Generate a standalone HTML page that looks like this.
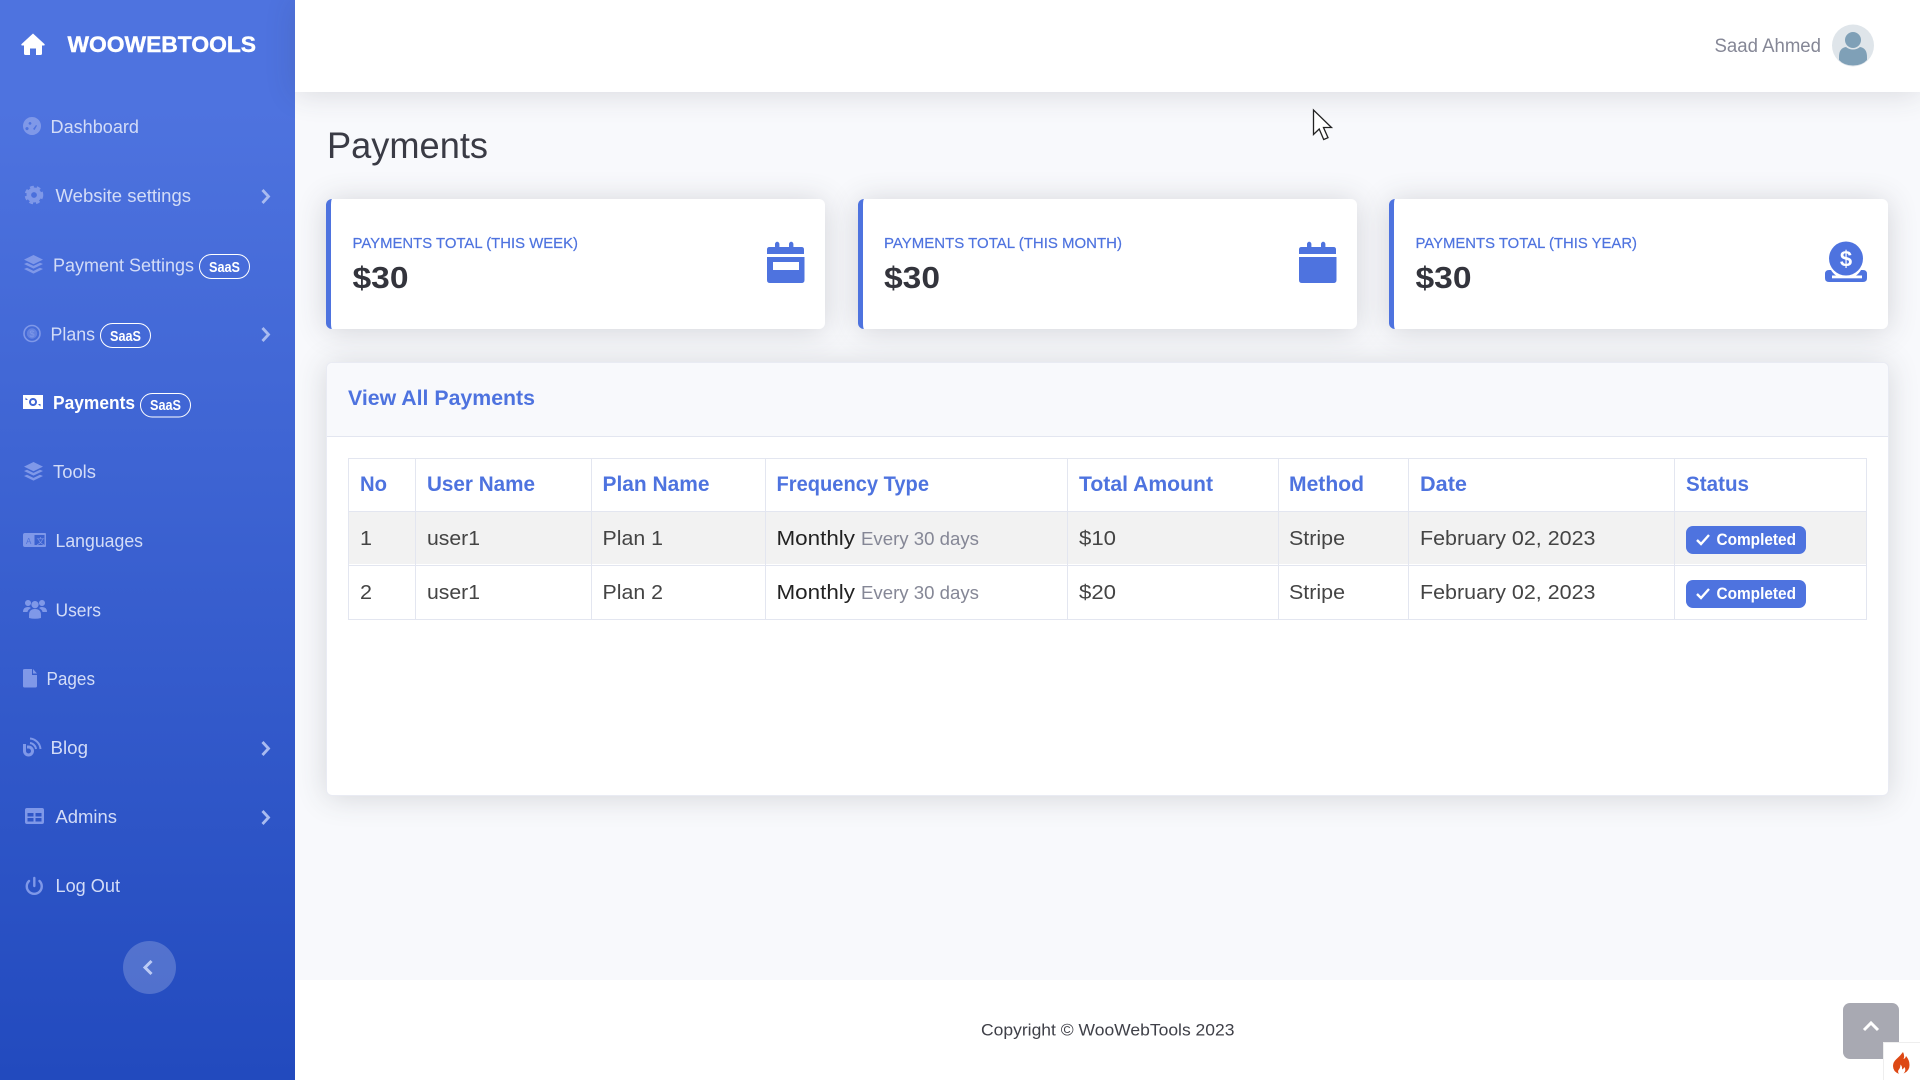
<!DOCTYPE html>
<html lang="en">
<head>
<meta charset="utf-8">
<title>Payments</title>
<style>
html,body{margin:0;padding:0;width:1920px;height:1080px;overflow:hidden;background:#f8f9fc;font-family:"Liberation Sans",sans-serif}
.a{position:absolute;box-sizing:border-box}
#side{left:0;top:0;width:295px;height:1080px;background:linear-gradient(180deg,#4e73df 10%,#224abe 100%)}
#top{left:295px;top:0;width:1625px;height:92px;background:#fff;box-shadow:0 2px 28px rgba(58,59,69,.16)}
.card{top:199px;width:499px;height:130px;background:#fff;border-left:5px solid #4e73df;border-radius:6px;box-shadow:0 2px 30px rgba(58,59,69,.2)}
#panel{left:326px;top:362px;width:1563px;height:434px;background:#fff;border:1px solid #e9ebf3;border-radius:6px;box-shadow:0 2px 30px rgba(58,59,69,.18)}
#phead{left:0;top:0;width:1561px;height:74px;background:#f8f9fc;border-bottom:1px solid #e3e6f0;border-radius:6px 6px 0 0}
#foot{left:295px;top:980px;width:1625px;height:100px;background:#fff}
#r1{left:348px;top:511px;width:1519px;height:53px;background:#f2f2f2}
.h{background:#e3e6f0}
.badge{left:1686px;width:120px;height:28px;background:#4e73df;border-radius:7px}
#up{left:1843px;top:1003px;width:56px;height:56px;background:#a8a9b2;border-radius:7px}
#fl{left:1883px;top:1042px;width:37px;height:38px;background:#fff;border-left:1px solid #eee;border-top:1px solid #eee}
svg{position:absolute;left:0;top:0}
text{font-family:"Liberation Sans",sans-serif}
.m{font-size:18.5px;fill:#d3dcf7}
.s{font-size:14.5px;font-weight:700;fill:#fff}
.i{fill:#7f98e8}
.th{font-size:21px;font-weight:700;fill:#4e73df}
.td{font-size:20.5px;fill:#444}
.lb{font-size:15px;fill:#4e73df;stroke:#4e73df;stroke-width:.2px}
.v{font-size:31px;font-weight:700;fill:#33343c}
</style>
</head>
<body>
<div class="a" id="side"></div>
<div class="a" id="foot"></div>
<div class="a" id="top"></div>
<div class="a card" style="left:326px"></div>
<div class="a card" style="left:858px"></div>
<div class="a card" style="left:1389px"></div>
<div class="a" id="panel"><div class="a" id="phead"></div></div>
<div class="a" id="r1"></div>
<div class="a h" style="left:348px;top:458px;width:1519px;height:1px"></div>
<div class="a h" style="left:348px;top:511px;width:1519px;height:1px"></div>
<div class="a h" style="left:348px;top:565px;width:1519px;height:1px"></div>
<div class="a h" style="left:348px;top:619px;width:1519px;height:1px"></div>
<div class="a h" style="left:348px;top:458px;width:1px;height:162px"></div>
<div class="a h" style="left:415px;top:458px;width:1px;height:162px"></div>
<div class="a h" style="left:591px;top:458px;width:1px;height:162px"></div>
<div class="a h" style="left:765px;top:458px;width:1px;height:162px"></div>
<div class="a h" style="left:1067px;top:458px;width:1px;height:162px"></div>
<div class="a h" style="left:1278px;top:458px;width:1px;height:162px"></div>
<div class="a h" style="left:1408px;top:458px;width:1px;height:162px"></div>
<div class="a h" style="left:1674px;top:458px;width:1px;height:162px"></div>
<div class="a h" style="left:1866px;top:458px;width:1px;height:162px"></div>
<div class="a badge" style="top:526px"></div>
<div class="a badge" style="top:580px"></div>
<div class="a" id="up"></div>
<div class="a" id="fl"></div>

<svg width="1920" height="1080" viewBox="0 0 1920 1080">
<!-- logo -->
<path fill="#fff" d="M33 33.5L21.6 44q-.8 1 .3 1.5H24v8q0 1.5 1.5 1.5H30v-6.5h6V55h4.5q1.5 0 1.5-1.5v-8h2.1q1.1-.5.3-1.5z"/>
<text x="67.500" y="52" font-size="22" font-weight="700" fill="#fff" stroke="#fff" stroke-width=".4" textLength="188.500" lengthAdjust="spacingAndGlyphs">WOOWEBTOOLS</text>

<!-- sidebar icons -->
<path class="i" fill-rule="evenodd" d="M32 117a9 9 0 1 0 .01 0zM27 127a1.6 1.6 0 1 0 .01 0zM30 122a1.4 1.4 0 1 0 .01 0zM36 125l-3 4 1.6 1 2.4-4.4z"/>
<circle cx="34" cy="195" r="5.200" fill="none" stroke="#7f98e8" stroke-width="4.600"/>
<circle cx="34" cy="195" r="8" fill="none" stroke="#7f98e8" stroke-width="2.600" stroke-dasharray="3.800 2.900"/>
<path class="i" d="M33.500 255L43 259.600 33.500 264.200 24 259.600zM24 264l3-1.300 6.500 3.200 6.500-3.200 3 1.300-9.500 4.600zM24 269l3-1.300 6.500 3.200 6.500-3.200 3 1.300-9.500 4.600z"/>
<circle cx="32" cy="333.500" r="8" fill="none" stroke="#7f98e8" stroke-width="1.600"/>
<circle cx="32" cy="333.500" r="5.200" class="i" fill-opacity=".55"/>
<text x="32" y="337" font-size="9" text-anchor="middle" fill="#7f98e8">$</text>
<path fill="#fff" fill-rule="evenodd" d="M23 395h20v14H23zM33 398a4 4 0 1 0 .01 0zM25.500 397.500v2.500h2.500zM40.500 406.500v-2.500h-2.500z"/>
<circle cx="33" cy="402" r="2" fill="#fff"/>
<path class="i" d="M33.500 462L43 466.600 33.500 471.200 24 466.600zM24 471l3-1.300 6.500 3.200 6.500-3.200 3 1.300-9.500 4.600zM24 476l3-1.300 6.500 3.200 6.500-3.200 3 1.300-9.500 4.600z"/>
<path class="i" fill-rule="evenodd" d="M25 533h20q1 0 1 1v12q0 1-1 1H25q-2 0-2-2v-10q0-2 2-2zM34.500 535v10h10v-10z"/>
<text x="26" y="544" font-size="8" fill="#4d70da">A</text>
<text x="36.500" y="544" font-size="8" fill="#7f98e8" style="font-family:'Liberation Sans','Noto Sans CJK SC',sans-serif">文</text>
<path class="i" d="M28 600a3 3 0 1 0 .01 0zM42 600a3 3 0 1 0 .01 0zM35 601a3.600 3.600 0 1 0 .01 0zM23 612q0-5 5-5 2 0 3 1-3 1.500-3.500 4zM47 612q0-5-5-5-2 0-3 1 3 1.500 3.500 4zM29 618v-3q0-6 6-6t6 6v3q-6 1.500-12 0z"/>
<path class="i" d="M25 669h7v6h5v11q0 1.500-1.500 1.500h-11q-1.500 0-1.500-1.500v-16q0-1 2-1zM33 669l4 4.500h-4z"/>
<path class="i" fill-rule="evenodd" d="M23 744v7a5.500 5.500 0 1 0 5.500-5.500h-1.500v3h1.500a2.500 2.500 0 1 1-2.500 2.500v-7z"/>
<path fill="none" stroke="#7f98e8" stroke-width="2" d="M30 743a7 7 0 0 1 6 6M30 738.500a11.500 11.500 0 0 1 10.500 10.500"/>
<path class="i" fill-rule="evenodd" d="M27 808h15q2 0 2 2v12q0 2-2 2H27q-2 0-2-2v-12q0-2 2-2zM27.500 813v3.500h6v-3.500zM35.500 813v3.500h6v-3.500zM27.500 818v3.500h6v-3.500zM35.500 818v3.500h6v-3.500z"/>
<path fill="none" stroke="#7f98e8" stroke-width="2.400" stroke-linecap="round" d="M29 881a7.500 7.500 0 1 0 10.500 0M34.300 878v8"/>

<!-- sidebar text -->
<text class="m" x="50.500" y="133" textLength="88.500" lengthAdjust="spacingAndGlyphs">Dashboard</text>
<text class="m" x="55.500" y="202" textLength="135.500" lengthAdjust="spacingAndGlyphs">Website settings</text>
<text class="m" x="53" y="271.500" textLength="141" lengthAdjust="spacingAndGlyphs">Payment Settings</text>
<rect x="199.500" y="254.500" width="50" height="24" rx="12" fill="none" stroke="#fff" stroke-width="1"/>
<text class="s" x="209" y="272" textLength="31" lengthAdjust="spacingAndGlyphs">SaaS</text>
<text class="m" x="50.500" y="340.500" textLength="44.500" lengthAdjust="spacingAndGlyphs">Plans</text>
<rect x="100.500" y="323.500" width="50" height="24" rx="12" fill="none" stroke="#fff" stroke-width="1"/>
<text class="s" x="110" y="341" textLength="31" lengthAdjust="spacingAndGlyphs">SaaS</text>
<text x="53" y="409" font-size="18.500" font-weight="700" fill="#fff" textLength="82" lengthAdjust="spacingAndGlyphs">Payments</text>
<rect x="140.500" y="393.500" width="50" height="23.500" rx="11.700" fill="none" stroke="#fff" stroke-width="1"/>
<text class="s" x="150" y="410" textLength="31" lengthAdjust="spacingAndGlyphs">SaaS</text>
<text class="m" x="53" y="478" textLength="43" lengthAdjust="spacingAndGlyphs">Tools</text>
<text class="m" x="55.500" y="547" textLength="87.500" lengthAdjust="spacingAndGlyphs">Languages</text>
<text class="m" x="55.500" y="616.500" textLength="45.500" lengthAdjust="spacingAndGlyphs">Users</text>
<text class="m" x="46.500" y="685" textLength="48.500" lengthAdjust="spacingAndGlyphs">Pages</text>
<text class="m" x="50.500" y="754" textLength="37.500" lengthAdjust="spacingAndGlyphs">Blog</text>
<text class="m" x="55.500" y="823" textLength="61.500" lengthAdjust="spacingAndGlyphs">Admins</text>
<text class="m" x="55.500" y="892" textLength="64.500" lengthAdjust="spacingAndGlyphs">Log Out</text>

<!-- chevrons -->
<g fill="none" stroke="#a9bbf0" stroke-width="2.800">
<path d="M262.500 190l6 6.500-6 6.500"/>
<path d="M262.500 328l6 6.500-6 6.500"/>
<path d="M262.500 742l6 6.500-6 6.500"/>
<path d="M262.500 811l6 6.500-6 6.500"/>
</g>
<circle cx="149.500" cy="967.500" r="26.500" fill="#fff" fill-opacity=".2"/>
<path d="M151.500 961l-6.500 6.500 6.500 6.500" fill="none" stroke="#bccbf5" stroke-width="3"/>

<!-- topbar -->
<text x="1714.500" y="52" font-size="19" fill="#858796" textLength="106.500" lengthAdjust="spacingAndGlyphs">Saad Ahmed</text>
<circle cx="1853" cy="45.500" r="21" fill="#dfe5ea"/>
<circle cx="1853" cy="40" r="8" fill="#7fa0b7"/>
<path fill="#7fa0b7" d="M1839 60v-3q0-9 7-10 3 2.500 7 2.500t7-2.500q7 1 7 10v3q-5 5.500-14 5.500t-14-5.500z"/>

<!-- title -->
<text x="327" y="158" font-size="37" fill="#3a3b45" textLength="161" lengthAdjust="spacingAndGlyphs">Payments</text>

<!-- cards -->
<text class="lb" x="352.500" y="248" textLength="225.500" lengthAdjust="spacingAndGlyphs">PAYMENTS TOTAL (THIS WEEK)</text>
<text class="v" x="352.500" y="288" textLength="56" lengthAdjust="spacingAndGlyphs">$30</text>
<text class="lb" x="884" y="248" textLength="238" lengthAdjust="spacingAndGlyphs">PAYMENTS TOTAL (THIS MONTH)</text>
<text class="v" x="884" y="288" textLength="56" lengthAdjust="spacingAndGlyphs">$30</text>
<text class="lb" x="1415.500" y="248" textLength="221.500" lengthAdjust="spacingAndGlyphs">PAYMENTS TOTAL (THIS YEAR)</text>
<text class="v" x="1415.500" y="288" textLength="56" lengthAdjust="spacingAndGlyphs">$30</text>

<path fill="#4e73df" fill-rule="evenodd" d="M775 247v-3a2.200 2.200 0 0 1 4.400 0v3h9.600v-3a2.200 2.200 0 0 1 4.400 0v3h8.100q2.500 0 2.500 2.500v4.500H767v-4.500q0-2.500 2.500-2.500zM767 257h37.500v23q0 3-3 3h-31.500q-3 0-3-3zM773 262v8h26v-8z"/>
<path fill="#4e73df" d="M1307 247v-3a2.200 2.200 0 0 1 4.400 0v3h9.600v-3a2.200 2.200 0 0 1 4.400 0v3h8.100q2.500 0 2.500 2.500v4.500H1299v-4.500q0-2.500 2.500-2.500zM1299 257h37.500v23q0 3-3 3h-31.500q-3 0-3-3z"/>
<circle cx="1846" cy="258.500" r="17" fill="#4e73df"/>
<path fill="#4e73df" d="M1829 270h2q2 3.500 5 5.500h20q3-2 5-5.500h2q4 0 4 4v4q0 4-4 4h-34q-4 0-4-4v-4q0-4 4-4z"/>
<rect x="1832" y="275.500" width="30" height="2.800" fill="#fff"/>
<text x="1846" y="266.500" font-size="22" font-weight="700" fill="#fff" text-anchor="middle">$</text>

<!-- panel -->
<text x="348" y="405" font-size="21" font-weight="700" fill="#4e73df" textLength="187" lengthAdjust="spacingAndGlyphs">View All Payments</text>

<text class="th" x="360" y="491" textLength="27" lengthAdjust="spacingAndGlyphs">No</text>
<text class="th" x="427" y="491" textLength="108" lengthAdjust="spacingAndGlyphs">User Name</text>
<text class="th" x="602.500" y="491" textLength="107" lengthAdjust="spacingAndGlyphs">Plan Name</text>
<text class="th" x="776.500" y="491" textLength="152.500" lengthAdjust="spacingAndGlyphs">Frequency Type</text>
<text class="th" x="1079" y="491" textLength="134" lengthAdjust="spacingAndGlyphs">Total Amount</text>
<text class="th" x="1289" y="491" textLength="75" lengthAdjust="spacingAndGlyphs">Method</text>
<text class="th" x="1420" y="491" textLength="47" lengthAdjust="spacingAndGlyphs">Date</text>
<text class="th" x="1686" y="491" textLength="63" lengthAdjust="spacingAndGlyphs">Status</text>

<text class="td" x="360" y="545" textLength="12" lengthAdjust="spacingAndGlyphs">1</text>
<text class="td" x="427" y="545" textLength="53" lengthAdjust="spacingAndGlyphs">user1</text>
<text class="td" x="602.500" y="545" textLength="60.500" lengthAdjust="spacingAndGlyphs">Plan 1</text>
<text class="td" x="776.500" y="545" textLength="78.500" lengthAdjust="spacingAndGlyphs" style="fill:#222">Monthly</text>
<text x="861" y="545" font-size="18" fill="#858796" textLength="118" lengthAdjust="spacingAndGlyphs">Every 30 days</text>
<text class="td" x="1079" y="545" textLength="37" lengthAdjust="spacingAndGlyphs">$10</text>
<text class="td" x="1289" y="545" textLength="56" lengthAdjust="spacingAndGlyphs">Stripe</text>
<text class="td" x="1420" y="545" textLength="175.500" lengthAdjust="spacingAndGlyphs">February 02, 2023</text>

<text class="td" x="360" y="599" textLength="12" lengthAdjust="spacingAndGlyphs">2</text>
<text class="td" x="427" y="599" textLength="53" lengthAdjust="spacingAndGlyphs">user1</text>
<text class="td" x="602.500" y="599" textLength="60.500" lengthAdjust="spacingAndGlyphs">Plan 2</text>
<text class="td" x="776.500" y="599" textLength="78.500" lengthAdjust="spacingAndGlyphs" style="fill:#222">Monthly</text>
<text x="861" y="599" font-size="18" fill="#858796" textLength="118" lengthAdjust="spacingAndGlyphs">Every 30 days</text>
<text class="td" x="1079" y="599" textLength="37" lengthAdjust="spacingAndGlyphs">$20</text>
<text class="td" x="1289" y="599" textLength="56" lengthAdjust="spacingAndGlyphs">Stripe</text>
<text class="td" x="1420" y="599" textLength="175.500" lengthAdjust="spacingAndGlyphs">February 02, 2023</text>

<path d="M1697 540l4 4 8-9M1697 594l4 4 8-9" fill="none" stroke="#fff" stroke-width="2.400"/>
<text x="1716.500" y="545" font-size="16.500" font-weight="700" fill="#fff" textLength="79.500" lengthAdjust="spacingAndGlyphs">Completed</text>
<text x="1716.500" y="599" font-size="16.500" font-weight="700" fill="#fff" textLength="79.500" lengthAdjust="spacingAndGlyphs">Completed</text>

<!-- footer -->
<text x="981" y="1035.500" font-size="17" fill="#3f4048" textLength="253.500" lengthAdjust="spacingAndGlyphs">Copyright © WooWebTools 2023</text>
<path d="M1864 1030l7-7 7 7" fill="none" stroke="#fff" stroke-width="3"/>
<path fill="#dd4814" d="M1903 1052q2 4 .5 7 2-.5 2.500-3 3.500 4 3.500 9 0 6-6 8.500 3-3 1-6.500-1 2-2.500 2.500.5-3-1.500-5 0 3.500-2 5.500-1 2 .5 4-6-2.500-6-8 0-4 3.500-7 4-3.500 6.500-7z"/>

<!-- cursor -->
<path fill="#fff" stroke="#222" stroke-width="1.300" d="M1313.500 110v24.500l5.700-5.500 4.500 10.500 4.300-1.800-4.500-10.200h8z"/>
</svg>
</body>
</html>
